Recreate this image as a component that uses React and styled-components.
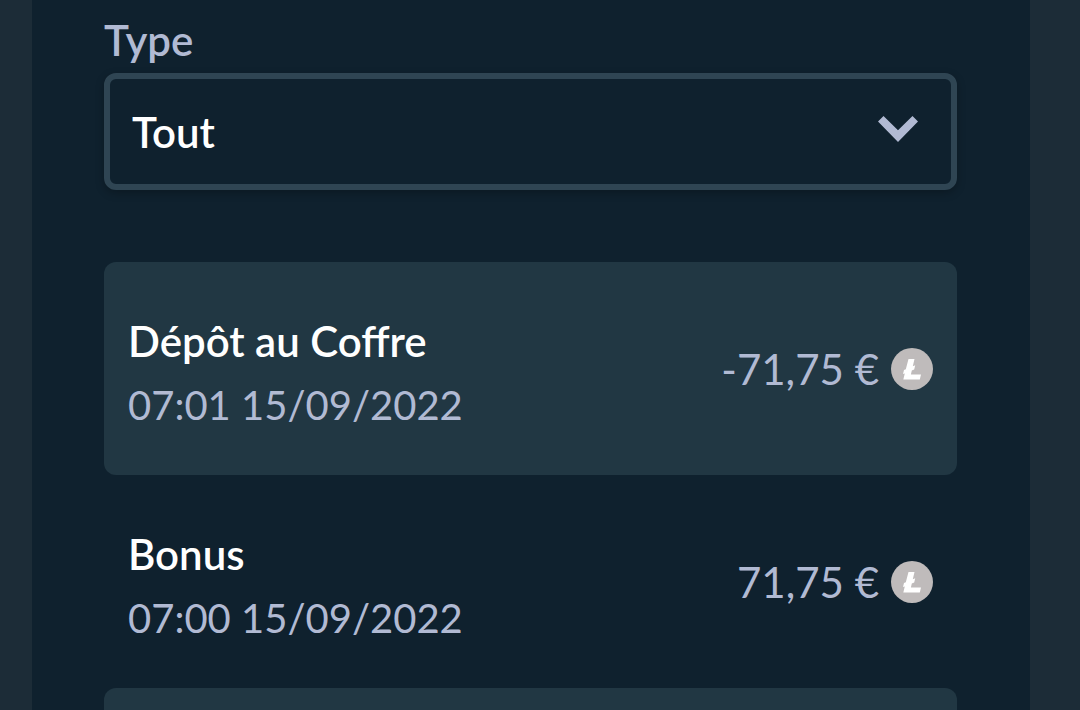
import styled, { createGlobalStyle } from 'styled-components';

const colors = {
  page: '#1c2c37',
  panel: '#0f212e',
  row: '#213743',
  border: '#2f4553',
  muted: '#b1bad3',
  coin: '#bfbbbb',
};

const GlobalStyle = createGlobalStyle`
  * {
    box-sizing: border-box;
  }

  body {
    background: ${colors.page};
    color: ${colors.muted};
    font-family: Lato, 'Liberation Sans', sans-serif;
    font-size: 42px;
    line-height: 64px;
    margin: 0;
  }
`

const Page = styled.div`
  display: flex;
  height: 100vh;
  overflow: hidden;
  padding: 0 50px 0 32px;
`

const Panel = styled.main`
  background: ${colors.panel};
  flex: 1;
  padding: 8px 73px 0 72px;
`

const Label = styled.label`
  display: block;
  font-weight: 600;
  margin-bottom: 1px;
`

const SelectBox = styled.div`
  margin-bottom: 72px;
  position: relative;
`

const Select = styled.select`
  appearance: none;
  background: ${colors.panel};
  border: 6px solid ${colors.border};
  border-radius: 12px;
  box-shadow: 0 3px 8px rgba(0, 0, 0, 0.25);
  color: white;
  display: block;
  font: inherit;
  font-weight: 600;
  height: 117px;
  padding: 0 96px 0 22px;
  width: 100%;
`

const Chevron = styled.svg`
  pointer-events: none;
  position: absolute;
  right: 39px;
  top: 43px;
`

const List = styled.ul`
  list-style: none;
  margin: 0;
  padding: 0;
`

const Row = styled.li`
  align-items: center;
  background: ${(props) => (props.$shaded ? colors.row : 'transparent')};
  border-radius: 12px;
  display: flex;
  justify-content: space-between;
  min-height: 213px;
  padding: 0 24px;
`

const Details = styled.div`
  padding-top: 8px;
`

const Title = styled.div`
  color: white;
  font-weight: 600;
`

const DateText = styled.div`
  font-size: 40px;
`

const Amount = styled.div`
  align-items: center;
  display: flex;
  gap: 12px;
`

const transactions = [{
  title: 'Dépôt au Coffre',
  date: '07:01 15/09/2022',
  amount: '-71,75 €',
}, {
  title: 'Bonus',
  date: '07:00 15/09/2022',
  amount: '71,75 €',
}];

const Litecoin = () => (
  <svg width="42" height="42" viewBox="0 0 42 42" aria-hidden="true">
    <circle cx="21" cy="21" r="21" fill={colors.coin} />
    <path fill="white" d="M17.5 11H23.5L21.8 18.2L24.2 17.2L23.2 21.4L20.8 22.4L19.9 26.4H30L28.8 31.5H12.3L13.8 25.4L12 26.1L13 22L14.8 21.3Z" />
  </svg>
);

const Transaction = ({ transaction, shaded }) => (
  <Row $shaded={shaded}>
    <Details>
      <Title>{transaction.title}</Title>
      <DateText>{transaction.date}</DateText>
    </Details>
    <Amount>
      <span>{transaction.amount}</span>
      <Litecoin />
    </Amount>
  </Row>
);

const App = () => (
  <Page>
    <GlobalStyle />
    <Panel>
      <Label htmlFor="type">Type</Label>
      <SelectBox>
        <Select id="type">
          <option>Tout</option>
        </Select>
        <Chevron width="40" height="26" viewBox="0 0 40 26" aria-hidden="true">
          <path fill={colors.muted} d="M0 5.5L5.5 0L20 14.3L34.5 0L40 5.5L20 26Z" />
        </Chevron>
      </SelectBox>
      <List>
        {transactions.map((transaction, i) =>
          <Transaction transaction={transaction} shaded={i % 2 === 0} key={i} />
        )}
        <Row $shaded />
      </List>
    </Panel>
  </Page>
);

export default App;
